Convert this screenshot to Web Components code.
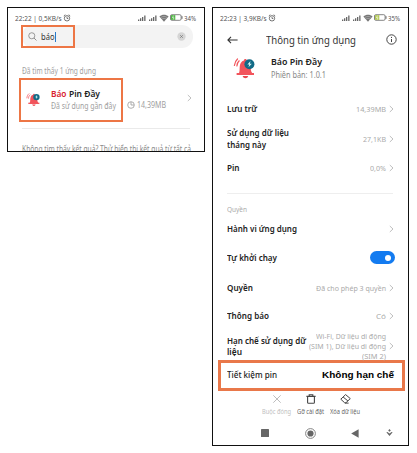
<!DOCTYPE html>
<html lang="vi">
<head>
<meta charset="utf-8">
<title>Thông tin ứng dụng</title>
<style>
body{margin:0;background:#fff;font-family:"Noto Sans","Open Sans",sans-serif;color:#222}
</style>
</head>
<body>
<phone-pair></phone-pair>
<script>
const define=(name,css,html,ready)=>customElements.define(name,class extends HTMLElement{
  connectedCallback(){
    if(this.shadowRoot)return;
    const r=this.attachShadow({mode:"open"});
    r.innerHTML="<style>*{box-sizing:border-box}svg{display:block}"+css+"</style>"+(typeof html==="function"?html(this):html);
    if(ready)ready(this,r);
  }
});

// One line of text, condensed or widened so that it fills the width given in "w".
define("fit-text",
  ":host{display:block;white-space:nowrap;text-align:left;flex:none}span{display:block;width:max-content;transform-origin:0 50%}",
  "<span><slot></slot></span>",
  (el,r)=>{
    const w=+el.getAttribute("w");
    el.style.width=w+"px";
    const s=r.querySelector("span");
    s.style.transform="scaleX("+(w/s.getBoundingClientRect().width)+")";
  });

const icons={
  bell:["0 0 22 22",`<path d="M5.5 17.2 C7.4 14.5 6 9.5 7.5 6.5 C8.5 4.3 10 3.8 11 3.5 C11 1.6 13.8 1.6 13.7 3.5 C17 4.5 18 8 17.8 11.5 C17.8 14 18.5 15.8 20.3 17.2Z" fill="#f2545b"/><path d="M3.6 16H21V18H3.6Z" fill="#f2545b"/><path d="M9.6 19H15.2C14.4 21.9 10.6 21.9 9.6 19Z" fill="#e9474e"/><path d="M1.4 8.5C1.7 5.5 2.8 3.5 4.5 2M3.9 9C4 6.8 4.9 5 6.2 3.8" fill="none" stroke="#f2545b" stroke-width="1.2" stroke-linecap="round"/><circle cx="16.4" cy="7.2" r="5" fill="#126a86"/><path d="M17.5 4L14.4 7.6H16.2L15.5 10.3L18.8 6.7H16.9Z" fill="#d8f4f4"/>`],
  search:["0 0 10 10",`<circle cx="4.2" cy="4.2" r="3.4" fill="none" stroke="#777" stroke-width=".8"/><path d="M6.6 6.6L9.4 9.4" stroke="#777" stroke-width=".9"/>`],
  clear:["0 0 10 10",`<circle cx="5" cy="5" r="4.6" fill="#d5d5d5"/><path d="M3.6 3.6L6.4 6.4M6.4 3.6L3.6 6.4" stroke="#777" stroke-width=".9"/>`],
  chev:["0 0 5 8",`<path d="M.8 1L4 4L.8 7" fill="none" stroke="#b8b8b8" stroke-width=".9"/>`],
  clock:["0 0 8 8",`<circle cx="4" cy="4" r="3.3" fill="none" stroke="#999" stroke-width=".8"/><path d="M4 1V4H7" fill="none" stroke="#999" stroke-width=".8"/>`],
  alarm:["0 0 8 8",`<circle cx="4" cy="4.3" r="2.7" fill="none" stroke="#555" stroke-width=".8"/><path d="M.8 2L2.3.7M7.2 2L5.7.7M4 2.7V4.5H5.3" fill="none" stroke="#555" stroke-width=".8"/>`],
  signal:["0 0 9 6",`<path d="M0 4.4H1.3V6H0ZM2 3.3H3.3V6H2ZM4 2H5.3V6H4ZM6.2 .4H7.5V6H6.2Z" fill="#666"/>`],
  wifi:["0 0 10 8",`<path d="M.4 2.6C3 .2 7 .2 9.6 2.6L5 7.7Z" fill="#777"/><path d="M1.7 3.7C3.7 2 6.3 2 8.3 3.7M3 5.1C4.3 4.1 5.7 4.1 7 5.1" fill="none" stroke="#ddd" stroke-width=".4"/>`],
  batt:["0 0 13 7",`<rect x=".5" y=".7" width="10.6" height="5.6" rx="1.3" fill="#fff" stroke="#666" stroke-width=".8"/><rect x="1" y="1.1" width="4.3" height="4.8" fill="var(--charge)"/><path d="M12 2.2V4.8" stroke="#666"/><path d="M3.6 1.6L2.4 3.7H4L3.3 5.5" stroke="#fff" stroke-width=".6" fill="none"/>`],
  back:["0 0 11 8",`<path d="M10.6 4H1M4 .8L.9 4L4 7.2" fill="none" stroke="#333" stroke-width="1.1"/>`],
  info:["0 0 11 11",`<circle cx="5.5" cy="5.5" r="4.7" fill="none" stroke="#444"/><path d="M5.5 5V8M5.5 2.9V4" stroke="#444" stroke-width="1"/>`],
  cross:["0 0 10 10",`<path d="M1.3 1.3L8.7 8.7M8.7 1.3L1.3 8.7" stroke="#b5b5b5" stroke-width=".9"/>`],
  trash:["0 0 10 10",`<path d="M.4 2.4H9.6M3.2 2V.8H6.8V2M1.6 2.6V8.4Q1.6 9.3 2.5 9.3H7.5Q8.4 9.3 8.4 8.4V2.6" fill="none" stroke="#444" stroke-width="1.1"/>`],
  eraser:["0 0 11 10",`<path d="M5.6 .6L10.3 4.6L5.9 8.8H4.7L.8 5.2ZM3.1 3L7.9 6.9M5 9.1H8.6" fill="none" stroke="#444" stroke-width="1"/>`],
  square:["0 0 8 8",`<rect width="8" height="8" rx=".6" fill="#666"/>`],
  home:["0 0 11 11",`<circle cx="5.5" cy="5.5" r="4.9" fill="none" stroke="#777" stroke-width=".9"/><circle cx="5.5" cy="5.5" r="3.1" fill="#666"/>`],
  tri:["0 0 8 9",`<path d="M.2 4.5L7.6 .3V8.7Z" fill="#666"/>`],
  drop:["0 0 8 9",`<path d="M4 0L5.5 1.5L4 3L2.5 1.5ZM.4 3.6L1.6 3.3L4 5L6.4 3.3L7.6 3.6L4 7.8Z" fill="#666"/>`]
};
define("line-icon",":host{display:block;flex:none}",
  el=>{const [v,p]=icons[el.getAttribute("name")];return `<svg width="${el.getAttribute("w")}" height="${el.getAttribute("h")}" viewBox="${v}">${p}</svg>`});

define("status-bar",
  ":host{display:flex;height:17px;align-items:center;padding:2px 8px 0 7px;font-size:7.8px;line-height:10px;color:#555}.sp{flex:1}.g{display:flex;align-items:center;gap:1px}",
  el=>`<div class="g"><fit-text w="46.5">${el.getAttribute("left")}</fit-text><line-icon name="alarm" w="8" h="8"></line-icon></div><div class="sp"></div>
  <div class="g"><line-icon name="signal" w="9" h="6" style="margin-right:1px"></line-icon><line-icon name="signal" w="9" h="6"></line-icon><line-icon name="wifi" w="10" h="8"></line-icon><line-icon name="batt" w="13" h="7"></line-icon><fit-text w="12">${el.getAttribute("level")}</fit-text></div>`);

define("search-field",
  `:host{display:flex;height:23px;width:171px;margin-left:14px;border-radius:11px;background:#f3f3f3;align-items:center;justify-content:space-between;padding-right:7px}
  .box{display:flex;align-items:center;width:54px;height:23px;margin-left:-1px;border:2px solid #ed7645;padding-left:5px;gap:4px;font-size:9px;line-height:12px;color:#333}
  .in{display:flex;align-items:center}.in i{width:1px;height:10px;background:#2979c9}`,
  `<div class="box"><line-icon name="search" w="9" h="9"></line-icon><div class="in"><fit-text w="13.5">báo</fit-text><i></i></div></div><line-icon name="clear" w="9" h="9"></line-icon>`);

define("search-screen",
  `:host{display:block;width:198px;height:145px;border:1px solid #111;overflow:hidden;background:#fff}
  .found{height:30px;padding:17px 0 0 14px;font-size:8px;line-height:12px;color:#a0a0a0}
  .row{display:flex;height:44px;margin-left:11px;align-items:center}
  .hit{display:flex;width:104px;height:44px;border:2px solid #ed7645;padding:0 0 2px 5px;align-items:center;gap:11px}
  .name{font-size:9.6px;line-height:13px;font-weight:600;display:flex;gap:2px}.name fit-text:first-child{color:#d8202f}
  .sub,.size{font-size:8.2px;line-height:12px;color:#a0a0a0}
  .size{display:flex;align-items:center;gap:2px;margin-left:4px;padding-top:10px}
  .ch{margin-left:21px;margin-top:-4px}
  .line{height:1px;background:#eaeaea;margin:6px 14px 0}
  .more{padding:14px 0 0 14px;font-size:8px;line-height:12px;color:#8a8a8a}`,
  `<status-bar left="22:22 | 0,5KB/s" level="34%" style="--charge:#52b548"></status-bar>
  <search-field></search-field>
  <div class="found"><fit-text w="74">Đã tìm thấy 1 ứng dụng</fit-text></div>
  <div class="row"><div class="hit"><line-icon name="bell" w="14" h="15"></line-icon>
  <div><div class="name"><fit-text w="15.5">Báo</fit-text><fit-text w="31">Pin Đầy</fit-text></div><div class="sub"><fit-text w="65">Đã sử dụng gần đây</fit-text></div></div></div>
  <div class="size"><line-icon name="clock" w="8" h="8"></line-icon><fit-text w="29">14,39MB</fit-text></div><line-icon class="ch" name="chev" w="5" h="8"></line-icon></div>
  <div class="line"></div>
  <div class="more"><fit-text w="169">Không tìm thấy kết quả? Thử hiển thị kết quả từ tất cả</fit-text></div>`);

define("setting-row",
  `:host{display:flex;height:29px;align-items:center;justify-content:space-between;padding:0 14px;font-size:9.2px;line-height:11.5px;font-weight:600;color:#222}
  .end{display:flex;align-items:center;gap:3px;color:#aaa;font-size:7.6px;line-height:10px;font-weight:400}
  .v{display:flex;flex-direction:column;align-items:flex-end}`,
  `<div><slot></slot></div><div class="end"><div class="v"><slot name="value"></slot></div><line-icon name="chev" w="5" h="8"></line-icon></div>`);

define("toggle-row",
  `:host{display:flex;height:29px;align-items:center;justify-content:space-between;padding:0 13px 0 14px;font-size:9.2px;line-height:11px;font-weight:600;color:#222}
  .t{width:25px;height:13px;border-radius:7px;background:#137bf0;display:flex;justify-content:flex-end;align-items:center;padding-right:4px}
  .t i{width:6px;height:6px;border-radius:50%;background:#fff}`,
  `<slot></slot><div class="t"><i></i></div>`);

define("info-screen",
  `:host{display:block;width:197px;height:439px;border:1px solid #111;overflow:hidden;background:#fff}
  .head{display:flex;height:29px;align-items:center;justify-content:space-between;padding:0 11px 0 14px;font-size:11.2px;line-height:16px;color:#333}
  .app{display:flex;height:32px;margin-bottom:8px;padding-left:20px;gap:16px;align-items:flex-start}
  .app line-icon{margin-top:3px}
  .n{font-size:9.6px;line-height:14px;font-weight:600;margin-top:1px;color:#222}.s{font-size:8px;line-height:12px;color:#888}
  .line{height:1px;background:#eee;margin:10px 15px 0 14px}
  .cap{height:23px;padding:11px 0 0 14px;font-size:7px;line-height:10px;color:#aaa}
  .box{display:flex;height:31px;margin:0 3px 0 5px;border:3px solid #e9784a;align-items:center;justify-content:space-between;padding:0 8px 2px 6px;font-size:9.2px;line-height:13px;font-weight:500;color:#222}
  .box .k{font-family:"Liberation Sans",Arial,sans-serif;font-size:9.8px;font-weight:700;color:#000}
  .acts{display:flex;height:30px;padding:3px 0 0 49px;gap:6px;font-size:7px;line-height:9px;color:#666}
  .acts div{display:flex;flex-direction:column;align-items:center;gap:3px}.acts .off{color:#c0c0c0}
  .bar{display:flex;height:24px;align-items:center;padding-left:48px;gap:37px}.bar line-icon:nth-child(4){margin-left:-10px}`,
  `<status-bar left="22:23 | 3,9KB/s" level="35%" style="--charge:#b3c957"></status-bar>
  <div class="head"><line-icon name="back" w="11" h="8"></line-icon><fit-text w="90" style="margin-right:2px">Thông tin ứng dụng</fit-text><line-icon name="info" w="11" h="11"></line-icon></div>
  <div class="app"><line-icon name="bell" w="22" h="22"></line-icon><div><div class="n"><fit-text w="51">Báo Pin Đầy</fit-text></div><div class="s"><fit-text w="55">Phiên bản: 1.0.1</fit-text></div></div></div>
  <setting-row style="height:30px"><fit-text w="30">Lưu trữ</fit-text><fit-text slot="value" w="30">14,39MB</fit-text></setting-row>
  <setting-row><fit-text w="62">Sử dụng dữ liệu</fit-text><fit-text w="39">tháng này</fit-text><fit-text slot="value" w="23">27,1KB</fit-text></setting-row>
  <setting-row style="height:30px"><fit-text w="12.5">Pin</fit-text><fit-text slot="value" w="16">0,0%</fit-text></setting-row>
  <div class="line"></div>
  <div class="cap"><fit-text w="20">Quyền</fit-text></div>
  <setting-row style="height:23px"><fit-text w="70">Hành vi ứng dụng</fit-text></setting-row>
  <toggle-row style="height:35px"><fit-text w="50">Tự khởi chạy</fit-text></toggle-row>
  <setting-row style="height:25px"><fit-text w="26">Quyền</fit-text><fit-text slot="value" w="70">Đã cho phép 3 quyền</fit-text></setting-row>
  <setting-row style="height:32px"><fit-text w="42">Thông báo</fit-text><fit-text slot="value" w="10">Có</fit-text></setting-row>
  <setting-row style="height:28px"><fit-text w="79">Hạn chế sử dụng dữ</fit-text><fit-text w="15">liệu</fit-text><fit-text slot="value" w="70">Wi-Fi, Dữ liệu di động</fit-text><fit-text slot="value" w="77">(SIM 1), Dữ liệu di động</fit-text><fit-text slot="value" w="24">(SIM 2)</fit-text></setting-row>
  <div class="box"><fit-text w="50">Tiết kiệm pin</fit-text><fit-text class="k" w="72">Không hạn chế</fit-text></div>
  <div class="acts"><div class="off"><line-icon name="cross" w="10" h="10"></line-icon><fit-text w="29">Buộc đóng</fit-text></div><div><line-icon name="trash" w="10" h="10"></line-icon><fit-text w="27">Gỡ cài đặt</fit-text></div><div><line-icon name="eraser" w="11" h="10"></line-icon><fit-text w="30">Xóa dữ liệu</fit-text></div></div>
  <div class="bar"><line-icon name="square" w="8" h="8"></line-icon><line-icon name="home" w="11" h="11" style="margin-left:-1px"></line-icon><line-icon name="tri" w="8" h="9" style="margin-left:-2px"></line-icon><line-icon name="drop" w="7" h="8"></line-icon></div>`);

define("phone-pair",":host{display:flex;box-sizing:border-box;gap:7px;padding:7px;align-items:flex-start;width:417px;height:453px;overflow:hidden}search-screen,info-screen{flex:none;box-sizing:border-box}",
  "<search-screen></search-screen><info-screen></info-screen>");
</script>
</body>
</html>
